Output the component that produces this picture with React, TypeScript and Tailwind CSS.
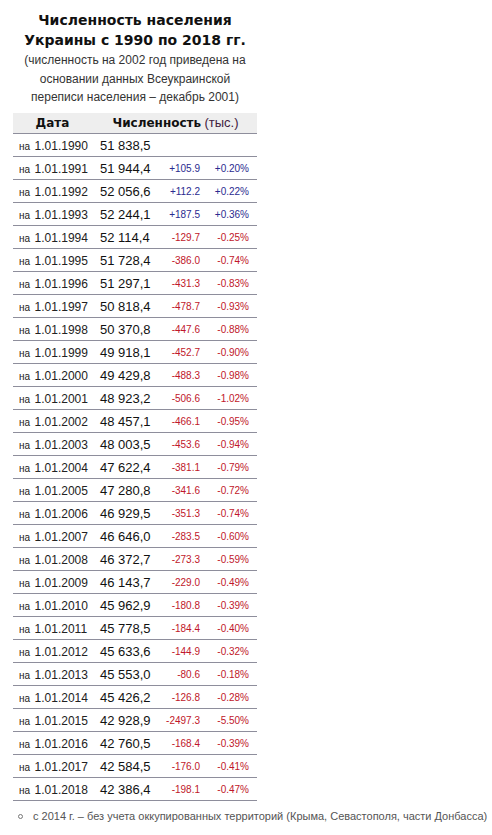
import React from "react";

const rows: [string, string, string, string][] = [
  ["1990", "51 838,5", "", ""],
  ["1991", "51 944,4", "+105.9", "+0.20%"],
  ["1992", "52 056,6", "+112.2", "+0.22%"],
  ["1993", "52 244,1", "+187.5", "+0.36%"],
  ["1994", "52 114,4", "-129.7", "-0.25%"],
  ["1995", "51 728,4", "-386.0", "-0.74%"],
  ["1996", "51 297,1", "-431.3", "-0.83%"],
  ["1997", "50 818,4", "-478.7", "-0.93%"],
  ["1998", "50 370,8", "-447.6", "-0.88%"],
  ["1999", "49 918,1", "-452.7", "-0.90%"],
  ["2000", "49 429,8", "-488.3", "-0.98%"],
  ["2001", "48 923,2", "-506.6", "-1.02%"],
  ["2002", "48 457,1", "-466.1", "-0.95%"],
  ["2003", "48 003,5", "-453.6", "-0.94%"],
  ["2004", "47 622,4", "-381.1", "-0.79%"],
  ["2005", "47 280,8", "-341.6", "-0.72%"],
  ["2006", "46 929,5", "-351.3", "-0.74%"],
  ["2007", "46 646,0", "-283.5", "-0.60%"],
  ["2008", "46 372,7", "-273.3", "-0.59%"],
  ["2009", "46 143,7", "-229.0", "-0.49%"],
  ["2010", "45 962,9", "-180.8", "-0.39%"],
  ["2011", "45 778,5", "-184.4", "-0.40%"],
  ["2012", "45 633,6", "-144.9", "-0.32%"],
  ["2013", "45 553,0", "-80.6", "-0.18%"],
  ["2014", "45 426,2", "-126.8", "-0.28%"],
  ["2015", "42 928,9", "-2497.3", "-5.50%"],
  ["2016", "42 760,5", "-168.4", "-0.39%"],
  ["2017", "42 584,5", "-176.0", "-0.41%"],
  ["2018", "42 386,4", "-198.1", "-0.47%"],
];

export default function App() {
  return (
    <div className="bg-white min-h-[835px] w-[492px] text-[#222]" style={{ fontFamily: '"Liberation Sans", Arial, sans-serif' }}>
      <div className="pl-[13px] pt-[10px] w-[257px]">
        <div className="text-center font-bold text-[14px] leading-[20px] text-[#111]" style={{ fontFamily: '"DejaVu Sans", Verdana, sans-serif' }}>
          Численность населения
          <br />
          Украины с 1990 по 2018 гг.
        </div>
        <div className="text-center text-[12px] leading-[18.5px] text-[#333] mt-[1px]">
          (численность на 2002 год приведена на
          <br />
          основании данных Всеукраинской
          <br />
          переписи населения – декабрь 2001)
        </div>
        <table className="w-[244px] table-fixed border-collapse mt-[6px]">
          <colgroup>
            <col className="w-[79px]" />
            <col className="w-[68px]" />
            <col className="w-[40px]" />
            <col className="w-[57px]" />
          </colgroup>
          <thead>
            <tr className="bg-[#eeeeee] border-b border-[#8e8e9c]">
              <th className="h-[21px] leading-none text-center text-[12px] font-bold text-[#111] p-0" style={{ fontFamily: '"DejaVu Sans", Verdana, sans-serif' }}>
                Дата
              </th>
              <th colSpan={3} className="h-[21px] leading-none text-center text-[12px] font-bold text-[#111] p-0 pl-[2px] whitespace-nowrap">
                <span style={{ fontFamily: '"DejaVu Sans", Verdana, sans-serif' }}>Численность</span>{" "}
                <span className="font-normal text-[13px] text-[#402040]">(тыс.)</span>
              </th>
            </tr>
          </thead>
          <tbody>
            {rows.map(([y, n, d, p]) => {
              const neg = d.startsWith("-");
              const col = neg ? "text-[#c0172a]" : "text-[#2b2b8f]";
              return (
                <tr key={y} className="border-b border-[#8e8e9c]">
                  <td className="h-[23px] leading-none p-0 pl-[6px] whitespace-nowrap align-middle">
                    <span className="text-[10px]">на</span>{" "}
                    <span className="text-[12px]">1.01.{y}</span>
                  </td>
                  <td className="h-[23px] leading-none p-0 text-[13px] text-[#111] pl-[8px] whitespace-nowrap align-middle">{n}</td>
                  <td className={`h-[23px] leading-none p-0 pt-[1px] text-[10px] text-right ${col} whitespace-nowrap align-middle`}>{d}</td>
                  <td className={`h-[23px] leading-none p-0 pt-[1px] text-[10px] text-right ${col} pr-[8px] whitespace-nowrap align-middle`}>{p}</td>
                </tr>
              );
            })}
          </tbody>
        </table>
      </div>
      <div className="flex items-center pl-[18px] mt-[7px] text-[11px] leading-[16px] text-[#555] whitespace-nowrap">
        <span className="inline-block w-[5px] h-[5px] rounded-full border border-[#777] mr-[10px]"></span>
        с 2014 г. – без учета оккупированных территорий (Крыма, Севастополя, части Донбасса)
      </div>
    </div>
  );
}
